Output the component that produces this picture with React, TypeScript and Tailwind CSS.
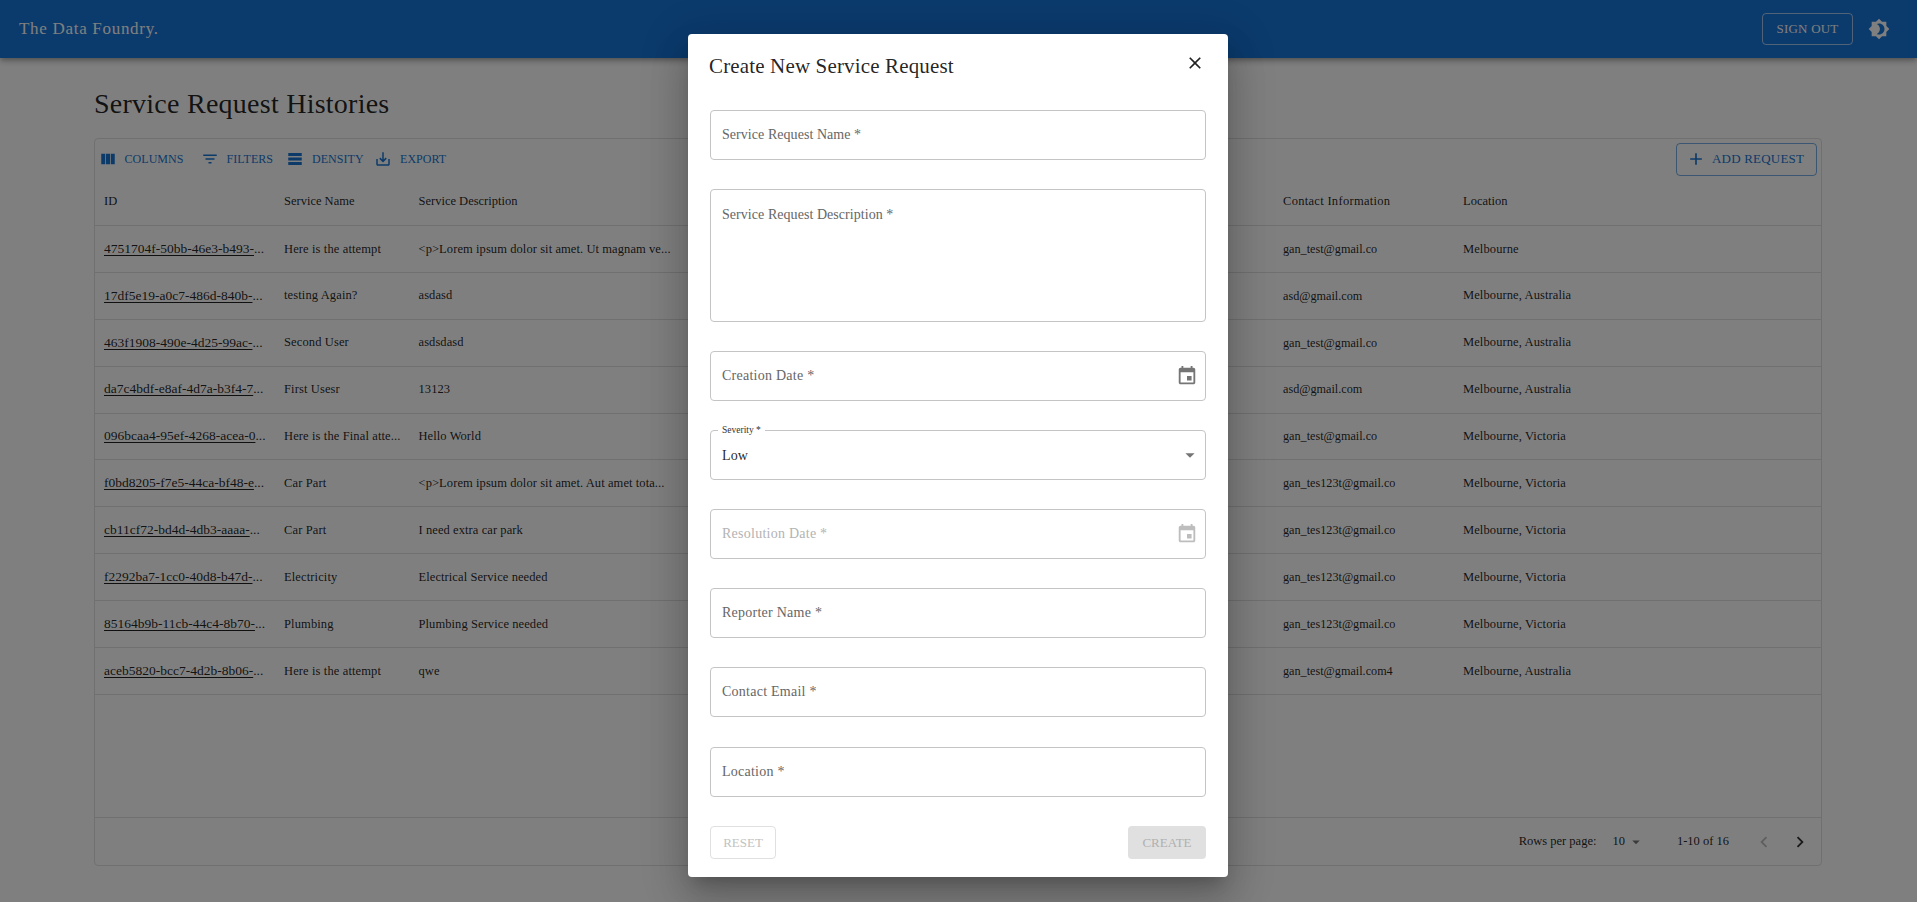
import React from "react";

const P = {
  col: "M14.67 5v14H9.33V5h5.34zm1 14H21V5h-5.33v14zm-7.34 0V5H3v14h5.33z",
  filter: "M10 18h4v-2h-4v2zM3 6v2h18V6H3zm3 7h12v-2H6v2z",
  density: "M21 8H3V4h18v4zm0 2H3v4h18v-4zm0 6H3v4h18v-4z",
  save: "M19 12v7H5v-7H3v7c0 1.1.9 2 2 2h14c1.1 0 2-.9 2-2v-7h-2zm-6 .67l2.59-2.58L17 11.5l-5 5-5-5 1.41-1.41L11 12.67V3h2z",
  add: "M19 13h-6v6h-2v-6H5v-2h6V5h2v6h6v2z",
  theme: "M20 8.69V4h-4.69L12 .69 8.69 4H4v4.69L.69 12 4 15.31V20h4.69L12 23.31 15.31 20H20v-4.69L23.31 12 20 8.69zM12 18c-.89 0-1.74-.2-2.5-.55C11.56 16.5 13 14.42 13 12s-1.44-4.5-3.5-5.45C10.26 6.2 11.11 6 12 6c3.31 0 6 2.69 6 6s-2.69 6-6 6z",
  drop: "M7 10l5 5 5-5z",
  left: "M15.41 16.59L10.83 12l4.58-4.59L14 6l-6 6 6 6 1.41-1.41z",
  right: "M8.59 16.59L13.17 12 8.59 7.41 10 6l6 6-6 6-1.41-1.41z",
  close: "M19 6.41L17.59 5 12 10.59 6.41 5 5 6.41 10.59 12 5 17.59 6.41 19 12 13.41 17.59 19 19 17.59 13.41 12z",
  event: "M17 12h-5v5h5v-5zM16 1v2H8V1H6v2H5c-1.11 0-1.99.9-1.99 2L3 19c0 1.1.89 2 2 2h14c1.1 0 2-.9 2-2V5c0-1.1-.9-2-2-2h-1V1h-2zm3 18H5V8h14v11z",
};

function Icon({ d, className }: { d: string; className: string }) {
  return (
    <svg viewBox="0 0 24 24" fill="currentColor" className={className}>
      <path d={d} />
    </svg>
  );
}

const rows = [
  ["4751704f-50bb-46e3-b493-...", "Here is the attempt", "<p>Lorem ipsum dolor sit amet. Ut magnam ve...", "gan_test@gmail.co", "Melbourne"],
  ["17df5e19-a0c7-486d-840b-...", "testing Again?", "asdasd", "asd@gmail.com", "Melbourne, Australia"],
  ["463f1908-490e-4d25-99ac-...", "Second User", "asdsdasd", "gan_test@gmail.co", "Melbourne, Australia"],
  ["da7c4bdf-e8af-4d7a-b3f4-7...", "First Usesr", "13123", "asd@gmail.com", "Melbourne, Australia"],
  ["096bcaa4-95ef-4268-acea-0...", "Here is the Final atte...", "Hello World", "gan_test@gmail.co", "Melbourne, Victoria"],
  ["f0bd8205-f7e5-44ca-bf48-e...", "Car Part", "<p>Lorem ipsum dolor sit amet. Aut amet tota...", "gan_tes123t@gmail.co", "Melbourne, Victoria"],
  ["cb11cf72-bd4d-4db3-aaaa-...", "Car Part", "I need extra car park", "gan_tes123t@gmail.co", "Melbourne, Victoria"],
  ["f2292ba7-1cc0-40d8-b47d-...", "Electricity", "Electrical Service needed", "gan_tes123t@gmail.co", "Melbourne, Victoria"],
  ["85164b9b-11cb-44c4-8b70-...", "Plumbing", "Plumbing Service needed", "gan_tes123t@gmail.co", "Melbourne, Victoria"],
  ["aceb5820-bcc7-4d2b-8b06-...", "Here is the attempt", "qwe", "gan_test@gmail.com4", "Melbourne, Australia"],
];

const gridCols = "grid grid-cols-[179px_134.5px_864.5px_180px_1fr] items-center";

function ToolButton({ d, label, className }: { d: string; label: string; className: string }) {
  return (
    <div className={`flex items-center ${className}`}>
      <Icon d={d} className="w-[18px] h-[18px] text-[#1976d2]" />
      <span className="text-[12px] tracking-[0.05px] text-[#1976d2] ml-[8px]">{label}</span>
    </div>
  );
}

function Field({ label, icon, disabled, tall, tight, className = "" }: { label: string; icon?: boolean; disabled?: boolean; tall?: boolean; tight?: boolean; className?: string }) {
  return (
    <div
      className={`border border-[#c4c4c4] rounded-[4px] flex justify-between pl-[11px] pr-[7px] shrink-0 ${
        tall ? "h-[133px] items-start pt-[16px]" : "h-[50px] items-center"
      } ${className}`}
    >
      <span className={`text-[14px] leading-[18px] ${tight ? "tracking-[0.05px]" : "tracking-[0.25px]"} ${disabled ? "text-[#b3b3b3]" : "text-[#666666]"}`}>{label}</span>
      {icon && <Icon d={P.event} className={`w-[22px] h-[22px] ${disabled ? "text-[#bdbdbd]" : "text-[#757575]"}`} />}
    </div>
  );
}

export default function App() {
  return (
    <div className="relative h-[902px] w-full overflow-hidden bg-white font-['Liberation_Serif',serif] text-[#000000de]">
      <header className="h-[58px] bg-[#1674d8] flex items-center justify-between pl-[19px] pr-[27px] shadow-[0_2px_4px_-1px_rgba(0,0,0,0.2),0_4px_5px_0_rgba(0,0,0,0.14),0_1px_10px_0_rgba(0,0,0,0.12)]">
        <span className="text-[17px] tracking-[0.7px] text-white">The Data Foundry.</span>
        <div className="flex items-center">
          <div className="w-[91px] h-[32px] -mt-[1px] border border-white/60 rounded-[4px] flex items-center justify-center text-[13px] tracking-[0.2px] text-white">
            SIGN OUT
          </div>
          <Icon d={P.theme} className="w-[22px] h-[22px] text-white ml-[15px]" />
        </div>
      </header>

      <main className="pl-[94px] pr-[95px]">
        <h1 className="text-[28px] leading-[36px] font-normal mt-[28px] tracking-[0.25px]">Service Request Histories</h1>
        <div className="mt-[16px] h-[728px] border border-[#e0e0e0] rounded-[4px] flex flex-col">
          <div className="h-[40px] flex items-center justify-between pl-[3.5px] pr-[4px] shrink-0">
            <div className="flex items-center">
              <ToolButton d={P.col} label="COLUMNS" className="w-[102px]" />
              <ToolButton d={P.filter} label="FILTERS" className="w-[85.5px]" />
              <ToolButton d={P.density} label="DENSITY" className="w-[88px]" />
              <ToolButton d={P.save} label="EXPORT" className="w-[80px]" />
            </div>
            <div className="w-[141px] h-[33px] border border-[#1976d2]/60 rounded-[4px] flex items-center pl-[9px] text-[#1976d2]">
              <Icon d={P.add} className="w-[20px] h-[20px]" />
              <span className="text-[13px] tracking-[0.2px] ml-[6px]">ADD REQUEST</span>
            </div>
          </div>
          <div className={`${gridCols} h-[47px] pb-[2px] border-b border-[#e0e0e0] shrink-0 text-[12.5px] font-normal`}>
            <span className="pl-[9px]">ID</span>
            <span className="pl-[10px]">Service Name</span>
            <span className="pl-[10px]">Service Description</span>
            <span className="pl-[10px] tracking-[0.3px]">Contact Information</span>
            <span className="pl-[10px]">Location</span>
          </div>
          {rows.map((r) => (
            <div key={r[0]} className={`${gridCols} h-[46.9px] border-b border-[#e0e0e0] shrink-0 text-[12.5px]`}>
              <span className="pl-[9px] text-[13.5px] whitespace-nowrap overflow-hidden">
                <span className="underline underline-offset-2">{r[0].slice(0, -3)}</span>
                ...
              </span>
              <span className="pl-[10px] whitespace-nowrap tracking-[0.12px]">{r[1]}</span>
              <span className="pl-[10px] whitespace-nowrap tracking-[0.08px]">{r[2]}</span>
              <span className="pl-[10px] whitespace-nowrap text-[12.2px]">{r[3]}</span>
              <span className="pl-[10px] whitespace-nowrap tracking-[0.1px]">{r[4]}</span>
            </div>
          ))}
          <div className="flex-1" />
          <div className="h-[48px] border-t border-[#e0e0e0] flex items-center justify-end shrink-0 pr-[10px] text-[12.5px]">
            <span>Rows per page:</span>
            <span className="ml-[16px]">10</span>
            <Icon d={P.drop} className="w-[18px] h-[18px] text-[#757575] ml-[2px]" />
            <span className="ml-[32px]">1-10 of 16</span>
            <Icon d={P.left} className="w-[22px] h-[22px] text-[#bdbdbd] ml-[24px]" />
            <Icon d={P.right} className="w-[22px] h-[22px] text-[#333333] ml-[14px]" />
          </div>
        </div>
      </main>

      <div className="absolute inset-0 bg-black/50" />

      <div className="absolute left-[688px] top-[34px] w-[540px] h-[843px] bg-white rounded-[4px] pl-[22px] pr-[22px] flex flex-col shadow-[0_11px_15px_-7px_rgba(0,0,0,0.2),0_24px_38px_3px_rgba(0,0,0,0.14),0_9px_46px_8px_rgba(0,0,0,0.12)]">
        <div className="h-[76px] flex items-center justify-between shrink-0">
          <span className="text-[21px] tracking-[0.15px] leading-[26px] mt-[-13px] ml-[-1px]">Create New Service Request</span>
          <Icon d={P.close} className="w-[20px] h-[20px] mt-[-19px] mr-[1px]" />
        </div>
        <div className="flex flex-col gap-[29px]">
          <Field tight label="Service Request Name *" />
          <Field tall tight label="Service Request Description *" />
          <Field icon label="Creation Date *" />
          <div className="relative h-[50px] border border-[#c4c4c4] rounded-[4px] flex items-center justify-between pl-[11px] pr-[4px] shrink-0">
            <span className="absolute left-[7px] top-[-6px] bg-white px-[4px] text-[9.5px] leading-[11px] text-[#333333]">Severity *</span>
            <span className="text-[14px] tracking-[0.1px] mt-[1px]">Low</span>
            <Icon d={P.drop} className="w-[22px] h-[22px] text-[#757575]" />
          </div>
          <Field icon disabled label="Resolution Date *" />
          <Field label="Reporter Name *" />
          <Field label="Contact Email *" className="mb-[1px]" />
          <Field label="Location *" />
        </div>
        <div className="flex justify-between mt-[29px]">
          <div className="w-[66px] h-[33px] border border-[#e0e0e0] rounded-[4px] flex items-center justify-center text-[13px] text-[#c2c2c2]">RESET</div>
          <div className="w-[78px] h-[33px] bg-[#e0e0e0] rounded-[4px] flex items-center justify-center text-[13px] text-[#b0b0b0]">CREATE</div>
        </div>
      </div>
    </div>
  );
}
